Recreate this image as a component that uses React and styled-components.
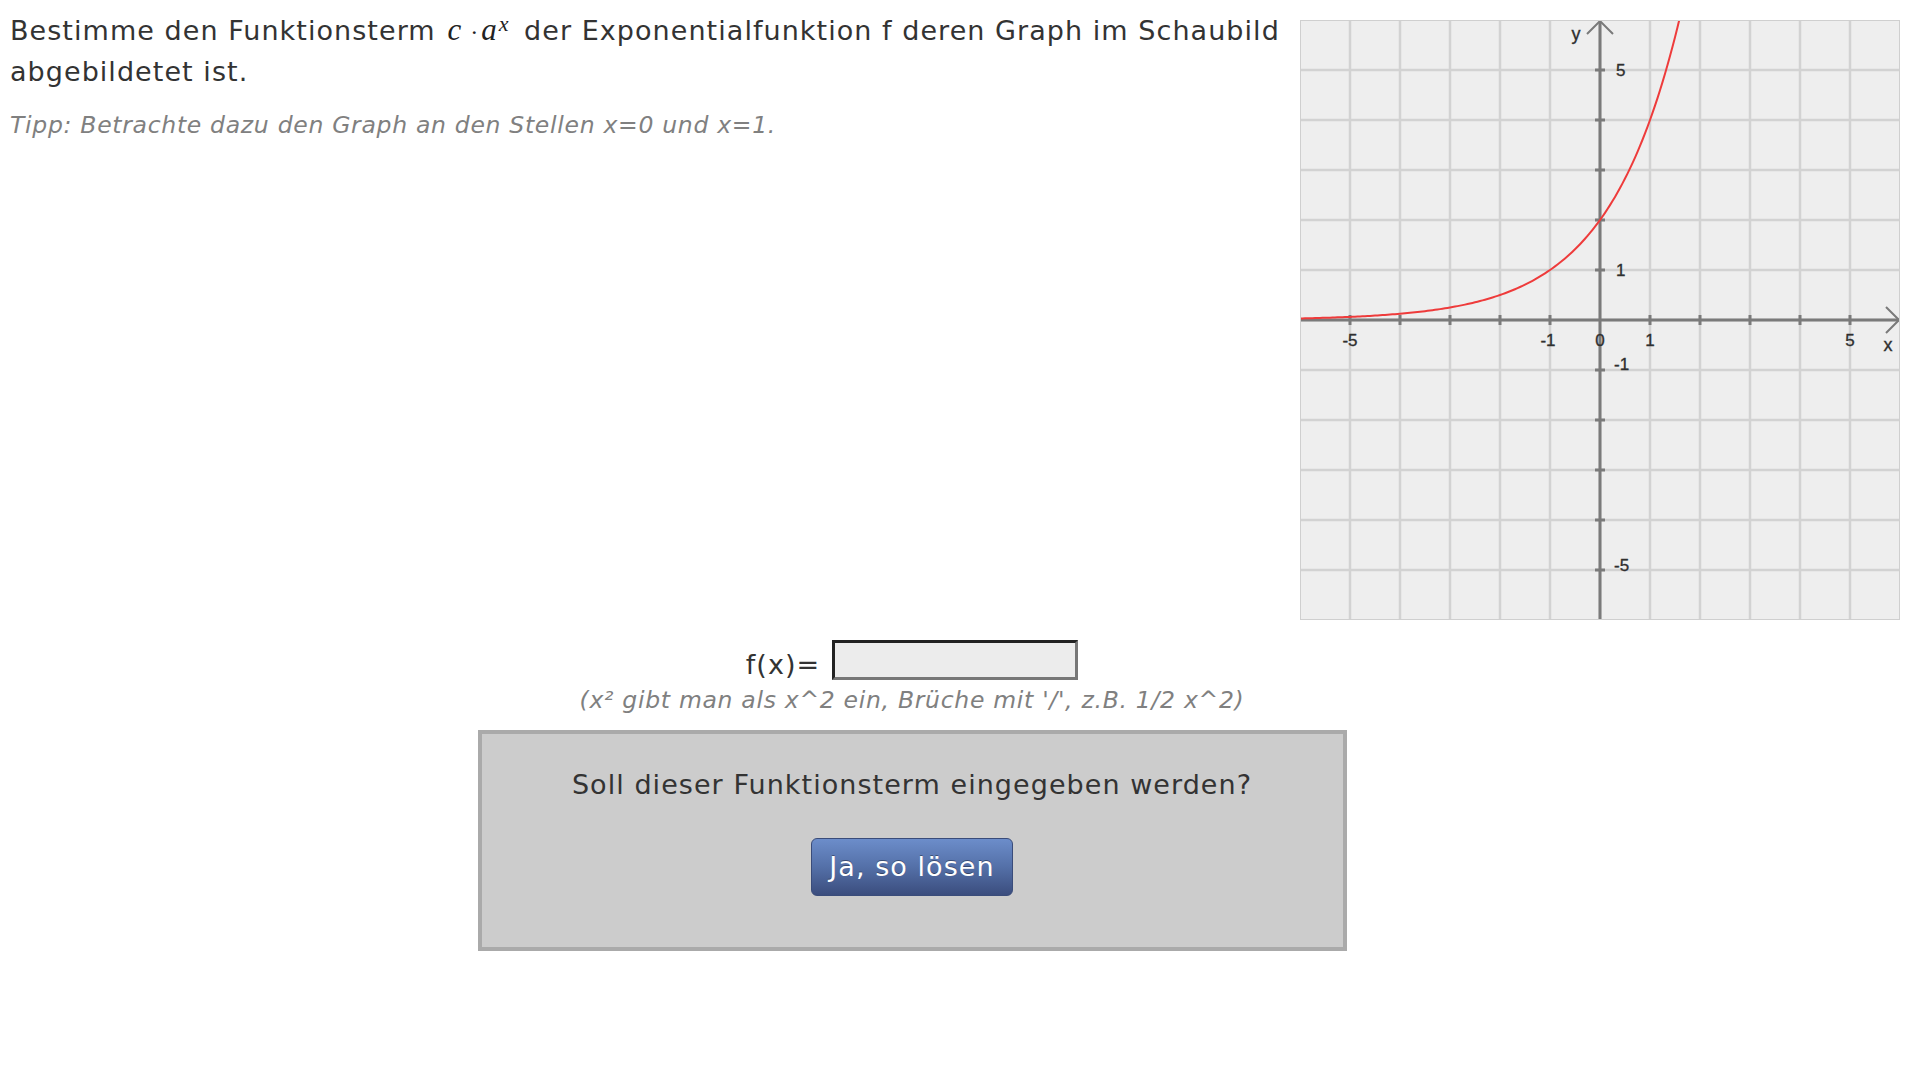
import React from "react";
import styled, { createGlobalStyle } from "styled-components";

const Global = createGlobalStyle`
  html, body { margin: 0; padding: 0; background: #fff; }
  body { font-family: Verdana, "DejaVu Sans", sans-serif; color: #333; }
`;

const Page = styled.div`
  width: 1920px;
`;

const Top = styled.div`
  display: flex;
  justify-content: space-between;
  align-items: flex-start;
  padding-left: 10px;
`;

const Intro = styled.div`
  flex: 1;
  padding-top: 10px;
`;

const Heading = styled.p`
  margin: 0;
  font-size: 27px;
  line-height: 39px;
  letter-spacing: 1.05px;
  color: #333;
`;

const MathTerm = styled.span`
  font-family: "Liberation Serif", "Times New Roman", serif;
  font-style: italic;
  font-size: 31px;
  letter-spacing: 0;
  color: #222;
  margin: 0 6px 0 4px;
  sup {
    font-size: 22px;
    vertical-align: 9px;
    line-height: 0;
    margin-left: 2px;
  }
`;

const Dot = styled.span`
  font-style: normal;
  font-size: 24px;
  margin: 0 3px 0 9px;
`;

const Hint = styled.p`
  margin: ${(p) => p.$mt || 0}px 0 0;
  font-size: 23.5px;
  line-height: ${(p) => p.$lh || 34}px;
  letter-spacing: 0.7px;
  font-style: italic;
  color: #808080;
`;

const GraphFrame = styled.div`
  width: 600px;
  height: 600px;
  margin: 20px 20px 0 0;
  flex: none;
  svg { display: block; }
`;

const Form = styled.div`
  width: 1824px;
  display: flex;
  flex-direction: column;
  align-items: center;
`;

const InputRow = styled.div`
  display: flex;
  align-items: flex-end;
  gap: 12px;
  margin-top: 20px;
`;

const Label = styled.span`
  font-size: 27px;
  line-height: 30px;
  letter-spacing: 1.05px;
  color: #333;
`;

const TermInput = styled.input`
  box-sizing: border-box;
  width: 246px;
  height: 40px;
  margin: 0;
  padding: 0 6px;
  background: #ececec;
  border-style: solid;
  border-width: 3px;
  border-color: #222 #777 #777 #222;
  font: inherit;
  font-size: 22px;
  outline: none;
`;

const ConfirmBox = styled.div`
  box-sizing: border-box;
  width: 869px;
  height: 221px;
  margin-top: 15px;
  border: 4px solid #aaaaaa;
  background: #cccccc;
  display: flex;
  flex-direction: column;
  align-items: center;
  padding-top: 31px;
`;

const Question = styled.p`
  margin: 0;
  font-size: 27px;
  line-height: 39px;
  letter-spacing: 1.05px;
  color: #333;
`;

const SolveButton = styled.button`
  margin-top: 34px;
  height: 58px;
  padding: 0 17px;
  border: 1px solid #3a4c7a;
  border-radius: 6px;
  background: linear-gradient(to bottom, #6c8dca 0%, #5470a8 50%, #3b4d7e 100%);
  color: #fff;
  font-family: Verdana, "DejaVu Sans", sans-serif;
  font-size: 27px;
  letter-spacing: 1.05px;
  line-height: 56px;
  text-shadow: 0 -1px 0 rgba(0, 0, 0, 0.35);
  cursor: pointer;
`;

const U = 50;
const O = 300;
const px = (x) => O + x * U;
const py = (y) => O - y * U;

function curvePath() {
  const pts = [];
  for (let x = -6; x <= 1.75; x += 0.05) {
    const y = 2 * Math.pow(2, x);
    pts.push(`${px(x).toFixed(2)},${py(y).toFixed(2)}`);
  }
  return "M" + pts.join(" L");
}

const Graph = () => {
  const lines = [];
  for (let i = 1; i < 12; i++) {
    lines.push(<line key={"v" + i} x1={i * U} y1={0} x2={i * U} y2={600} />);
    lines.push(<line key={"h" + i} x1={0} y1={i * U} x2={600} y2={i * U} />);
  }
  const ticks = [];
  for (let i = -5; i <= 5; i++) {
    if (i === 0) continue;
    ticks.push(<line key={"tx" + i} x1={px(i)} y1={O - 5} x2={px(i)} y2={O + 5} />);
    ticks.push(<line key={"ty" + i} x1={O - 5} y1={py(i)} x2={O + 5} y2={py(i)} />);
  }
  return (
    <svg width="600" height="600" viewBox="0 0 600 600">
      <defs>
        <clipPath id="area">
          <rect x="0" y="0" width="600" height="600" />
        </clipPath>
      </defs>
      <rect x="0" y="0" width="600" height="600" fill="#eeeeee" />
      <g stroke="#d2d2d2" strokeWidth="2.5">{lines}</g>
      <g stroke="#7a7a7a" strokeWidth="3" fill="none">
        <line x1="0" y1={O} x2="599" y2={O} />
        <line x1={O} y1="600" x2={O} y2="2" />
        <polyline points="586,287 599,300 586,313" strokeWidth="2" />
        <polyline points="287,14 300,1 313,14" strokeWidth="2" />
      </g>
      <g stroke="#7a7a7a" strokeWidth="3">{ticks}</g>
      <path d={curvePath()} fill="none" stroke="#ee3b3b" strokeWidth="2" clipPath="url(#area)" />
      <g
        fontFamily='"Liberation Sans", Arial, sans-serif'
        fontSize="17"
        fill="#2f2f2f"
        stroke="#2f2f2f"
        strokeWidth="0.35"
      >
        <text x="276" y="20" textAnchor="middle" fontSize="18">y</text>
        <text x="316" y="56">5</text>
        <text x="316" y="256">1</text>
        <text x="314" y="350">-1</text>
        <text x="314" y="551">-5</text>
        <text x={px(-5)} y="326" textAnchor="middle">-5</text>
        <text x={px(-1) - 2} y="326" textAnchor="middle">-1</text>
        <text x={px(0)} y="326" textAnchor="middle">0</text>
        <text x={px(1)} y="326" textAnchor="middle">1</text>
        <text x={px(5)} y="326" textAnchor="middle">5</text>
        <text x="588" y="331" textAnchor="middle" fontSize="18">x</text>
      </g>
      <rect x="0.5" y="0.5" width="599" height="599" fill="none" stroke="#cfcfcf" />
    </svg>
  );
};

export default function App() {
  return (
    <Page>
      <Global />
      <Top>
        <Intro>
          <Heading>
            Bestimme den Funktionsterm
            <MathTerm>
              {" "}c<Dot>·</Dot>a<sup>x</sup>
            </MathTerm>
            {" "}der Exponentialfunktion f deren Graph im Schaubild abgebildetet ist.
          </Heading>
          <Hint $mt={17}>Tipp: Betrachte dazu den Graph an den Stellen x=0 und x=1.</Hint>
        </Intro>
        <GraphFrame>
          <Graph />
        </GraphFrame>
      </Top>
      <Form>
        <InputRow>
          <Label>f(x)=</Label>
          <TermInput type="text" />
        </InputRow>
        <Hint $mt={5} $lh={30}>(x² gibt man als x^2 ein, Brüche mit '/', z.B. 1/2 x^2)</Hint>
        <ConfirmBox>
          <Question>Soll dieser Funktionsterm eingegeben werden?</Question>
          <SolveButton type="button">Ja, so lösen</SolveButton>
        </ConfirmBox>
      </Form>
    </Page>
  );
}
